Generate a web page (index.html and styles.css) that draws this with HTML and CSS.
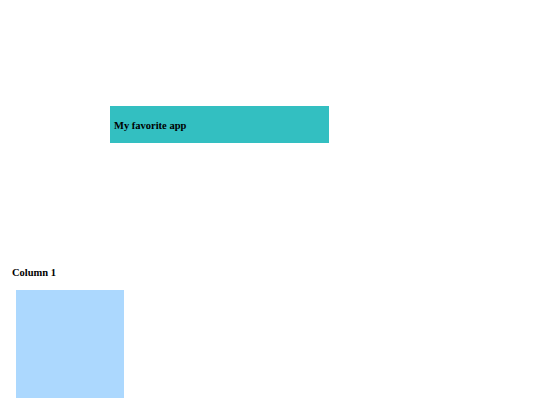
FILE: index.html
```html
<!DOCTYPE html>
<html>
<head>
<meta charset="utf-8">
<link rel="stylesheet" href="styles.css">
</head>
<body>
<div class="page">
  <header class="app-header">
    <h1 class="app-title">My favorite app</h1>
  </header>
  <section class="columns">
    <div class="column">
      <h2 class="column-title">Column 1</h2>
      <div class="column-box"></div>
    </div>
  </section>
</div>
</body>
</html>
```
FILE: styles.css
```css
html, body {
  margin: 0;
  padding: 0;
  background: #ffffff;
}
.page {
  font-family: "Liberation Serif", "Times New Roman", serif;
  color: #000;
  padding-top: 106px;
}
.app-header {
  margin-left: 110px;
  width: 219px;
  height: 37px;
  background: #33bfc1;
  display: flex;
  align-items: center;
  padding-left: 4px;
  padding-top: 1px;
  box-sizing: border-box;
}
.app-title {
  margin: 0;
  font-size: 10.5px;
  font-weight: bold;
  line-height: 13px;
}
.columns {
  margin-top: 123px;
  padding-left: 12px;
}
.column-title {
  margin: 0;
  font-size: 10.5px;
  font-weight: bold;
  line-height: 13px;
}
.column-box {
  margin-top: 11px;
  margin-left: 4px;
  width: 108px;
  height: 108px;
  background: #acd8fe;
}
```
